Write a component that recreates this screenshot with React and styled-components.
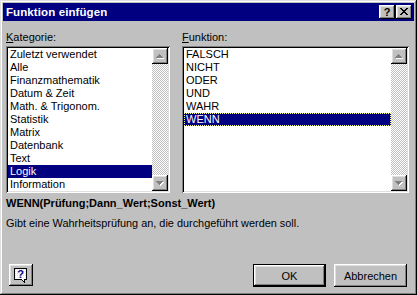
import styled, { createGlobalStyle } from "styled-components";

const categories = [
  "Zuletzt verwendet",
  "Alle",
  "Finanzmathematik",
  "Datum & Zeit",
  "Math. & Trigonom.",
  "Statistik",
  "Matrix",
  "Datenbank",
  "Text",
  "Logik",
  "Information",
];

const functions = ["FALSCH", "NICHT", "ODER", "UND", "WAHR", "WENN"];

export default function App() {
  return (
    <>
      <GlobalStyle />
      <Window>
        <TitleBar>
          <Title>Funktion einfügen</Title>
          <CaptionButtons>
            <CaptionButton>?</CaptionButton>
            <CaptionButton>
              <svg width="8" height="7" viewBox="0 0 8 7" shapeRendering="crispEdges">
                <path d="M0 0h2v1h-2zM6 0h2v1h-2zM1 1h2v1h-2zM5 1h2v1h-2zM2 2h4v1h-4zM3 3h2v1h-2zM2 4h4v1h-4zM1 5h2v1h-2zM5 5h2v1h-2zM0 6h2v1h-2zM6 6h2v1h-2z" fill="#000" />
              </svg>
            </CaptionButton>
          </CaptionButtons>
        </TitleBar>

        <Body>
          <Columns>
            <Column $width={164}>
              <Label>
                <u>K</u>ategorie:
              </Label>
              <ListBox>
                <Items>
                  {categories.map((item) => (
                    <Item key={item} $selected={item === "Logik"}>
                      {item}
                    </Item>
                  ))}
                </Items>
                <ScrollBar />
              </ListBox>
            </Column>
            <Column $width={227}>
              <Label>
                <u>F</u>unktion:
              </Label>
              <ListBox>
                <Items>
                  {functions.map((item) => (
                    <Item key={item} $selected={item === "WENN"} $focused={item === "WENN"}>
                      {item}
                    </Item>
                  ))}
                </Items>
                <ScrollBar />
              </ListBox>
            </Column>
          </Columns>

          <Syntax>WENN(Prüfung;Dann_Wert;Sonst_Wert)</Syntax>
          <Description>Gibt eine Wahrheitsprüfung an, die durchgeführt werden soll.</Description>

          <Footer>
            <HelpButton>
              <svg width="16" height="17" viewBox="0 0 16 17" shapeRendering="crispEdges">
                <defs>
                  <pattern id="dither" width="2" height="2" patternUnits="userSpaceOnUse">
                    <rect width="2" height="2" fill="#fff" />
                    <rect width="1" height="1" fill="#ffff00" />
                  </pattern>
                </defs>
                <path d="M1.5 1.5h12v11h-2v3l-3-3h-7z" fill="url(#dither)" stroke="#000" />
                <text x="7.5" y="11" textAnchor="middle" fontFamily="Liberation Sans, Arial, sans-serif" fontWeight="bold" fontSize="11" fill="#000080">
                  ?
                </text>
              </svg>
            </HelpButton>
            <Spacer />
            <PushButton $default>OK</PushButton>
            <PushButton>Abbrechen</PushButton>
          </Footer>
        </Body>
      </Window>
    </>
  );
}

function ScrollBar() {
  return (
    <Scroll>
      <ArrowButton>
        <svg width="16" height="16" viewBox="0 0 16 16" shapeRendering="crispEdges">
          <path d="M8 7h1v1h-1zM7 8h3v1h-3zM6 9h5v1h-5zM5 10h7v1h-7z" fill="#fff" />
          <path d="M7 6h1v1h-1zM6 7h3v1h-3zM5 8h5v1h-5zM4 9h7v1h-7z" fill="#808080" />
        </svg>
      </ArrowButton>
      <Track />
      <ArrowButton>
        <svg width="16" height="16" viewBox="0 0 16 16" shapeRendering="crispEdges">
          <path d="M5 7h7v1h-7zM6 8h5v1h-5zM7 9h3v1h-3zM8 10h1v1h-1z" fill="#fff" />
          <path d="M4 6h7v1h-7zM5 7h5v1h-5zM6 8h3v1h-3zM7 9h1v1h-1z" fill="#808080" />
        </svg>
      </ArrowButton>
    </Scroll>
  );
}

const GlobalStyle = createGlobalStyle`
  html, body {
    margin: 0;
    padding: 0;
    background: #c0c0c0;
  }
  body {
    font-family: "Liberation Sans", Arial, sans-serif;
    font-size: 11px;
    color: #000;
  }
`;

const raised = `inset -1px -1px #000, inset 1px 1px #fff,
  inset -2px -2px #808080, inset 2px 2px #dfdfdf`;

const Window = styled.div`
  box-sizing: border-box;
  width: 417px;
  height: 295px;
  padding: 3px;
  display: flex;
  flex-direction: column;
  background: #c0c0c0;
  box-shadow: inset -1px -1px #000, inset 1px 1px #dfdfdf,
    inset -2px -2px #808080, inset 2px 2px #fff;
`;

const TitleBar = styled.div`
  height: 18px;
  flex-shrink: 0;
  display: flex;
  align-items: center;
  padding: 0 2px 0 3px;
  background: #000080;
`;

const Title = styled.div`
  flex: 1;
  color: #fff;
  font-weight: bold;
  font-size: 11.5px;
  letter-spacing: 0.1px;
`;

const CaptionButtons = styled.div`
  display: flex;
  gap: 1px;
`;

const CaptionButton = styled.div`
  box-sizing: border-box;
  width: 16px;
  height: 14px;
  display: flex;
  align-items: center;
  justify-content: center;
  padding-bottom: 1px;
  background: #c0c0c0;
  font-weight: bold;
  font-size: 11px;
  box-shadow: ${raised};
`;

const Body = styled.div`
  flex: 1;
  display: flex;
  flex-direction: column;
  padding: 10px 5px 5px 3px;
`;

const Columns = styled.div`
  display: flex;
  gap: 12px;
`;

const Column = styled.div`
  width: ${(p) => p.$width}px;
  display: flex;
  flex-direction: column;
  gap: 2px;
`;

const Label = styled.div`
  line-height: 13px;
  height: 13px;
`;

const ListBox = styled.div`
  box-sizing: border-box;
  height: 147px;
  padding: 2px;
  display: flex;
  background: #fff;
  box-shadow: inset 1px 1px #808080, inset -1px -1px #fff,
    inset 2px 2px #000, inset -2px -2px #dfdfdf;
`;

const Items = styled.div`
  flex: 1;
  overflow: hidden;
`;

const Item = styled.div`
  box-sizing: border-box;
  height: 13px;
  line-height: 13px;
  padding-left: 2px;
  white-space: nowrap;
  background: ${(p) => (p.$selected ? "#000080" : "transparent")};
  color: ${(p) => (p.$selected ? "#fff" : "#000")};
  outline: ${(p) => (p.$focused ? "1px dotted #ffff80" : "none")};
  outline-offset: -1px;
`;

const Scroll = styled.div`
  width: 16px;
  display: flex;
  flex-direction: column;
`;

const ArrowButton = styled.div`
  width: 16px;
  height: 16px;
  flex-shrink: 0;
  background: #c0c0c0;
  box-shadow: ${raised};
  svg {
    display: block;
  }
`;

const Track = styled.div`
  flex: 1;
  background-image: conic-gradient(#fff 25%, #c0c0c0 0 50%, #fff 0 75%, #c0c0c0 0);
  background-size: 2px 2px;
`;

const Syntax = styled.div`
  margin-top: 4px;
  line-height: 13px;
  font-weight: bold;
  font-size: 11px;
`;

const Description = styled.div`
  margin-top: 7px;
  line-height: 13px;
  font-size: 10.9px;
`;

const Footer = styled.div`
  margin-top: auto;
  display: flex;
  align-items: flex-start;
  gap: 8px;
  padding: 0 2px 0 3px;
`;

const Spacer = styled.div`
  flex: 1;
`;

const HelpButton = styled.div`
  width: 24px;
  height: 22px;
  display: flex;
  align-items: center;
  justify-content: center;
  background: #c0c0c0;
  box-shadow: ${raised};
`;

const PushButton = styled.div`
  box-sizing: border-box;
  width: 73px;
  height: 23px;
  display: flex;
  align-items: center;
  justify-content: center;
  background: #c0c0c0;
  border: ${(p) => (p.$default ? "1px solid #000" : "none")};
  box-shadow: ${raised};
`;
